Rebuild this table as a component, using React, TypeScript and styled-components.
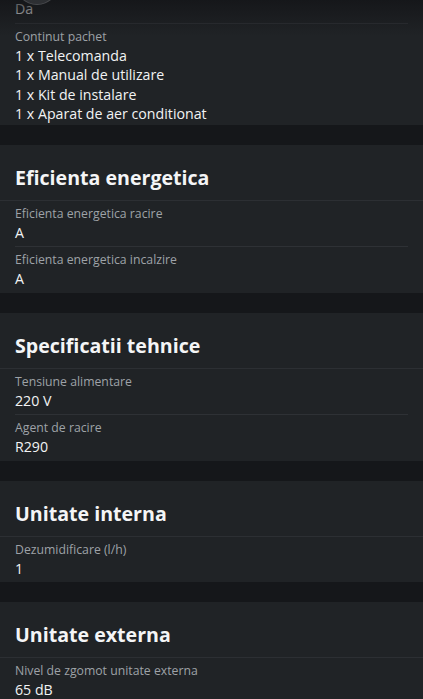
import { FC } from "react";
import styled, { createGlobalStyle } from "styled-components";

const GlobalStyle = createGlobalStyle`
  html, body {
    margin: 0;
    padding: 0;
    background: #15171a;
    font-family: 'Open Sans', 'Noto Sans', sans-serif;
  }
  * {
    box-sizing: border-box;
  }
`;

const Page = styled.div`
  position: relative;
  width: 423px;
  height: 699px;
  overflow: hidden;
  background: #15171a;
`;

const Stack = styled.div`
  display: flex;
  flex-direction: column;
  gap: 20px;
  margin-top: -23px;
`;

const Card = styled.section<{ $tight?: boolean }>`
  display: flex;
  flex-direction: column;
  background: #202326;
  & > div:last-child > div {
    padding-bottom: ${(p) => (p.$tight ? "1px" : "4px")};
  }
`;

const CardHeader = styled.h2`
  margin: 0;
  padding: 19px 15px 8px;
  font-size: 19.6px;
  line-height: 28px;
  font-weight: 700;
  color: #f4f5f6;
  border-bottom: 1px solid #2c2f33;
`;

const Item = styled.div`
  display: flex;
  flex-direction: column;
  padding: 4px 15px 4px;
`;

const Divider = styled.hr`
  margin: 0 15px;
  height: 0;
  border: none;
  border-top: 1px solid #2e3135;
`;

const Label = styled.div`
  font-size: 12.25px;
  line-height: 18px;
  color: #9ea2a7;
`;

const Value = styled.div`
  font-size: 14.2px;
  line-height: 19.5px;
  font-weight: 500;
  color: #f2f3f4;
`;

const TopShade = styled.div`
  position: absolute;
  left: 0;
  right: 0;
  top: 0;
  height: 36px;
  background: linear-gradient(to bottom, rgba(18, 19, 22, 0.75), rgba(18, 19, 22, 0));
  pointer-events: none;
`;

const FloatingButton = styled.div`
  position: absolute;
  left: 15px;
  top: -39px;
  width: 44px;
  height: 44px;
  border-radius: 50%;
  background: rgba(90, 92, 96, 0.35);
  border: 1px solid rgba(150, 152, 156, 0.25);
`;

type Row = { label: string; values: string[] };
type Section = { title?: string; rows: Row[] };

const sections: Section[] = [
  {
    rows: [
      { label: "Functie Wi-Fi", values: ["Da"] },
      {
        label: "Continut pachet",
        values: [
          "1 x Telecomanda",
          "1 x Manual de utilizare",
          "1 x Kit de instalare",
          "1 x Aparat de aer conditionat",
        ],
      },
    ],
  },
  {
    title: "Eficienta energetica",
    rows: [
      { label: "Eficienta energetica racire", values: ["A"] },
      { label: "Eficienta energetica incalzire", values: ["A"] },
    ],
  },
  {
    title: "Specificatii tehnice",
    rows: [
      { label: "Tensiune alimentare", values: ["220 V"] },
      { label: "Agent de racire", values: ["R290"] },
    ],
  },
  {
    title: "Unitate interna",
    rows: [{ label: "Dezumidificare (l/h)", values: ["1"] }],
  },
  {
    title: "Unitate externa",
    rows: [{ label: "Nivel de zgomot unitate externa", values: ["65 dB"] }],
  },
];

const App: FC = () => {
  return (
    <Page>
      <GlobalStyle />
      <Stack>
        {sections.map((section, i) => (
          <Card key={i} $tight={!section.title}>
            {section.title && <CardHeader>{section.title}</CardHeader>}
            {section.rows.map((row, id) => (
              <div key={id}>
                {id !== 0 && <Divider />}
                <Item>
                  <Label>{row.label}</Label>
                  {row.values.map((v) => (
                    <Value key={v}>{v}</Value>
                  ))}
                </Item>
              </div>
            ))}
          </Card>
        ))}
      </Stack>
      <TopShade />
      <FloatingButton />
    </Page>
  );
};

export default App;
